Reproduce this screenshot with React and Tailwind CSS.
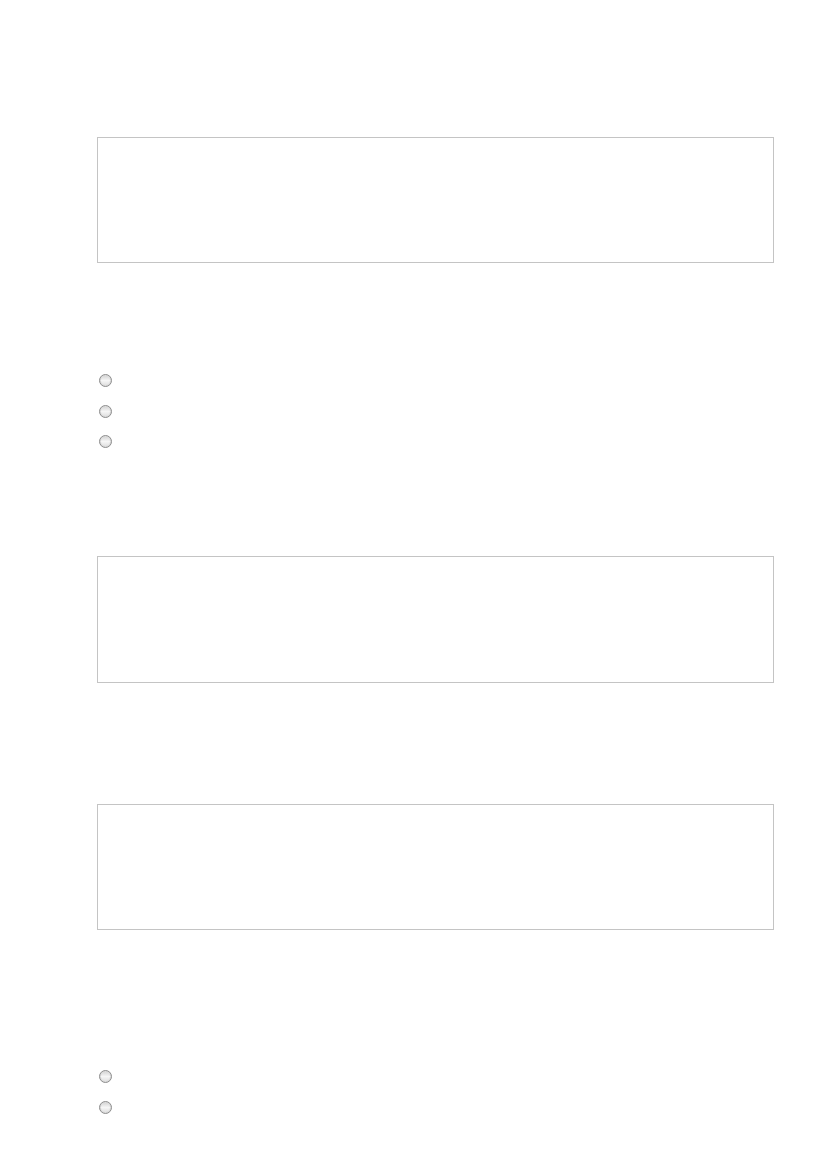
const Box = ({ className = '' }) => (
  <div className={`w-[677px] h-[126px] border border-[#c4c4c4] bg-white ${className}`} />
);

// grey radio, drawn as rings
const Radio = ({ className = '' }) => (
  <div className={`ml-[2px] w-[13px] h-[13px] rounded-full border border-[#8e8e8e] p-[1px] bg-[#dcdcdc] ${className}`}>
    <div className="w-full h-full rounded-full bg-gradient-to-b from-[#d8d8d8] via-[#f6f6f6] to-[#e2e2e2]" />
  </div>
);

export default function App() {
  return (
    <div className="w-[827px] h-[1169px] bg-white pl-[97px] flex flex-col">
      <Box className="mt-[137px]" />
      <Radio className="mt-[111px]" />
      <Radio className="mt-[18px]" />
      <Radio className="mt-[17px]" />
      <Box className="mt-[108px] h-[127px]" />
      <Box className="mt-[121px]" />
      <Radio className="mt-[140px]" />
      <Radio className="mt-[18px]" />
    </div>
  );
}
